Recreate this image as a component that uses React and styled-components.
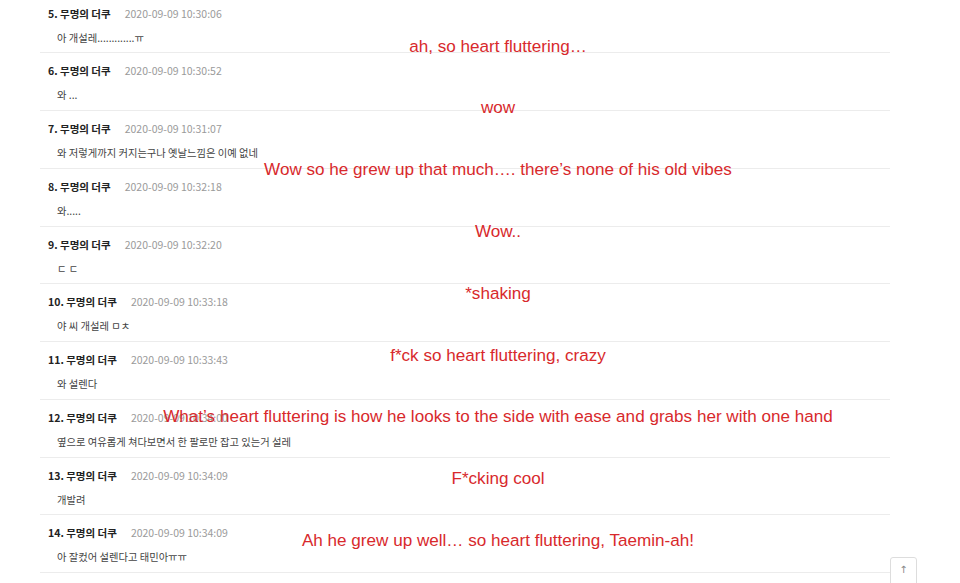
import styled, { createGlobalStyle } from 'styled-components';

const GlobalStyle = createGlobalStyle`
    html, body {
        margin: 0;
        padding: 0;
        background: #fff;
        overflow: hidden;
    }
    body {
        font-family: "Noto Sans CJK KR", "Noto Sans", sans-serif;
    }
`;

const Page = styled.div`
    position: relative;
    width: 960px;
    height: 583px;
    overflow: hidden;
`;

const CommentList = styled.ul`
    list-style: none;
    margin: -4.5px 0 0 40px;
    padding: 0;
    width: 850px;
`;

const CommentItem = styled.li`
    box-sizing: border-box;
    height: 57.78px;
    padding: 10px 0 0 8px;
    border-bottom: 1px solid #ececec;
`;

const CommentHead = styled.div`
    display: flex;
    align-items: center;
    gap: 14px;
    height: 16px;
    font-size: 10.5px;
    line-height: 16px;
`;

const Author = styled.b`
    color: #222;
    font-weight: 700;
`;

const Date = styled.span`
    color: #9a9a9a;
`;

const CommentBody = styled.p`
    margin: 8px 0 0 9px;
    font-size: 10.3px;
    line-height: 16px;
    color: #444;
`;

const Overlay = styled.div`
    position: absolute;
    inset: 0;
    pointer-events: none;
`;

const Caption = styled.span`
    position: absolute;
    left: 498px;
    top: ${p => p.$y + 1}px;
    transform: translate(-50%, -50%);
    white-space: nowrap;
    font-family: "Liberation Sans", Arial, sans-serif;
    font-size: 17.1px;
    color: #d8292c;
`;

const TopButton = styled.button`
    position: fixed;
    left: 890px;
    top: 557px;
    width: 27px;
    height: 32px;
    padding: 6px 0 0;
    display: flex;
    justify-content: center;
    align-items: flex-start;
    background: #fff;
    border: 1px solid #ddd;
    border-radius: 3px;
    color: #888;
    font-size: 10px;
    font-family: "DejaVu Sans", sans-serif;
`;

const comments = [
    { n: 5, date: '2020-09-09 10:30:06', text: '아 개설레.............ㅠ' },
    { n: 6, date: '2020-09-09 10:30:52', text: '와 ...' },
    { n: 7, date: '2020-09-09 10:31:07', text: '와 저렇게까지 커지는구나 옛날느낌은 이예 없네' },
    { n: 8, date: '2020-09-09 10:32:18', text: '와.....' },
    { n: 9, date: '2020-09-09 10:32:20', text: 'ㄷ ㄷ' },
    { n: 10, date: '2020-09-09 10:33:18', text: '야 씨 개설레 ㅁㅊ' },
    { n: 11, date: '2020-09-09 10:33:43', text: '와 설렌다' },
    { n: 12, date: '2020-09-09 10:34:00', text: '옆으로 여유롭게 쳐다보면서 한 팔로만 잡고 있는거 설레' },
    { n: 13, date: '2020-09-09 10:34:09', text: '개발려' },
    { n: 14, date: '2020-09-09 10:34:09', text: '아 잘컸어 설렌다고 태민아ㅠㅠ' },
];

const captions = [
    { y: 46, text: 'ah, so heart fluttering…' },
    { y: 107, text: 'wow' },
    { y: 169, text: 'Wow so he grew up that much…. there’s none of his old vibes' },
    { y: 231, text: 'Wow..' },
    { y: 293, text: '*shaking' },
    { y: 355, text: 'f*ck so heart fluttering, crazy' },
    { y: 416, text: 'What’s heart fluttering is how he looks to the side with ease and grabs her with one hand' },
    { y: 478, text: 'F*cking cool' },
    { y: 540, text: 'Ah he grew up well… so heart fluttering, Taemin-ah!' },
];

export default function App() {
    return (
        <Page>
            <GlobalStyle />
            <CommentList>
                {comments.map(c => (
                    <CommentItem key={c.n}>
                        <CommentHead>
                            <Author>{c.n}. 무명의 더쿠</Author>
                            <Date>{c.date}</Date>
                        </CommentHead>
                        <CommentBody>{c.text}</CommentBody>
                    </CommentItem>
                ))}
            </CommentList>
            <Overlay>
                {captions.map(c => (
                    <Caption key={c.y} $y={c.y}>{c.text}</Caption>
                ))}
            </Overlay>
            <TopButton aria-label="top">↑</TopButton>
        </Page>
    );
}
